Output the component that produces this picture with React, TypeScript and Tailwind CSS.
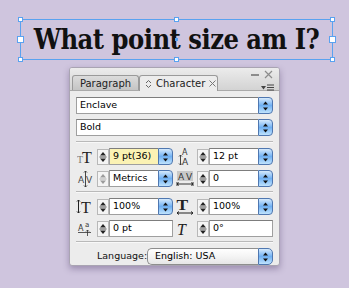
import type { ReactNode } from 'react';

const ui = { fontFamily: '"DejaVu Sans", "Liberation Sans", sans-serif' };
const serif = '"Liberation Serif", "DejaVu Serif", serif';

function Handle({ className, big }: { className: string; big?: boolean }) {
  return (
    <div
      className={`absolute bg-white border border-[#5aa2f0] ${big ? 'w-[7px] h-[7px]' : 'w-[5px] h-[5px]'} ${className}`}
    />
  );
}

function AquaArrows() {
  return (
    <svg width="7" height="10" viewBox="0 0 7 10">
      <path d="M3.5 0.5 L6 3.5 L1 3.5 Z" fill="#111" />
      <path d="M3.5 9.5 L6 6.5 L1 6.5 Z" fill="#111" />
    </svg>
  );
}

function AquaButton({ round }: { round?: boolean }) {
  return (
    <div
      className={`w-[15px] h-full flex items-center justify-center border border-[#4f77b0] bg-gradient-to-b from-[#d6eafc] via-[#6fb0f2] to-[#bfe3fd] ${
        round ? 'rounded-r-[5px]' : 'rounded-r-[4px]'
      }`}
    >
      <AquaArrows />
    </div>
  );
}

function Stepper({ disabled }: { disabled?: boolean }) {
  const c = disabled ? '#9c9c9c' : '#222';
  return (
    <div className="w-[12px] h-[16px] flex items-center justify-center border border-[#b8b8b8] bg-[#f4f4f4]">
      <svg width="8" height="12" viewBox="0 0 8 12">
        <path d="M4 1 L7 4.5 L1 4.5 Z" fill={c} />
        <rect x="0.5" y="5.6" width="7" height="0.8" fill={c} />
        <path d="M4 11 L7 7.5 L1 7.5 Z" fill={c} />
      </svg>
    </div>
  );
}

function Field({ value, yellow, w }: { value: string; yellow?: boolean; w: string }) {
  return (
    <div className={`flex h-[17px] ${w}`}>
      <div
        className={`flex-1 flex items-center pl-[3px] text-[9.5px] text-black border border-r-0 border-[#9f9f9f] border-t-[#7d7d7d] ${
          yellow ? 'bg-[#fbf2b4]' : 'bg-white'
        }`}
      >
        {value}
      </div>
      <AquaButton />
    </div>
  );
}

function Control({ icon, value, yellow, disabled }: { icon: ReactNode; value: string; yellow?: boolean; disabled?: boolean }) {
  return (
    <div className="flex items-center">
      <div className="w-[18px] h-[17px] flex items-center justify-center">{icon}</div>
      <div className="ml-[3px]">
        <Stepper disabled={disabled} />
      </div>
      <Field value={value} yellow={yellow} w="w-[64px]" />
    </div>
  );
}

function Plain({ icon, value }: { icon: ReactNode; value: string }) {
  return (
    <div className="flex items-center">
      <div className="w-[18px] h-[17px] flex items-center justify-center">{icon}</div>
      <div className="ml-[3px]">
        <Stepper />
      </div>
      <div className="w-[64px] h-[17px] flex items-center pl-[3px] text-[9.5px] bg-white border border-[#9f9f9f] border-t-[#7d7d7d]">
        {value}
      </div>
    </div>
  );
}

const SizeIcon = (
  <svg width="17" height="17" viewBox="0 0 17 17">
    <text x="0" y="15" fontFamily={serif} fontSize="10" fill="#777">T</text>
    <text x="5" y="15" fontFamily={serif} fontSize="16" fill="#222">T</text>
  </svg>
);

const LeadingIcon = (
  <svg width="16" height="18" viewBox="0 0 16 18">
    <text x="5" y="7" fontFamily={ui.fontFamily} fontSize="8" fill="#333">A</text>
    <text x="5" y="17" fontFamily={ui.fontFamily} fontSize="9" fill="#333">A</text>
    <path d="M3.5 7 V17 M2 8.5 L3.5 7 L5 8.5 M2 15.5 L3.5 17 L5 15.5" stroke="#333" strokeWidth="0.9" fill="none" />
  </svg>
);

const KernIcon = (
  <svg width="17" height="18" viewBox="0 0 17 18">
    <text x="1" y="13" fontFamily={ui.fontFamily} fontSize="9" fill="#444">A</text>
    <text x="9" y="13" fontFamily={ui.fontFamily} fontSize="9" fill="#444">V</text>
    <path d="M8.5 1 V17 M7 2.5 L8.5 1 L10 2.5 M7 15.5 L8.5 17 L10 15.5" stroke="#333" strokeWidth="0.9" fill="none" />
  </svg>
);

const TrackIcon = (
  <svg width="18" height="17" viewBox="0 0 18 17">
    <rect x="1" y="1" width="16" height="10" fill="#c8c8c8" />
    <text x="2" y="10" fontFamily={ui.fontFamily} fontSize="9" fill="#333">A</text>
    <text x="10" y="10" fontFamily={ui.fontFamily} fontSize="9" fill="#333">V</text>
    <path d="M1 14 H17 M3 12.5 L1 14 L3 15.5 M15 12.5 L17 14 L15 15.5 M1 12 V16 M17 12 V16" stroke="#222" strokeWidth="0.9" fill="none" />
  </svg>
);

const VScaleIcon = (
  <svg width="18" height="17" viewBox="0 0 18 17">
    <path d="M2.5 2 V15 M1 3.5 L2.5 2 L4 3.5 M1 13.5 L2.5 15 L4 13.5" stroke="#222" strokeWidth="1" fill="none" />
    <text x="5" y="14.5" fontFamily={serif} fontSize="16" fill="#222">T</text>
  </svg>
);

const HScaleIcon = (
  <svg width="18" height="17" viewBox="0 0 18 17">
    <text x="0.5" y="12" fontFamily={serif} fontSize="14" fontWeight="bold" fill="#222" transform="scale(1.25 1)">T</text>
    <path d="M1 15 H17 M3 13.5 L1 15 L3 16.5 M15 13.5 L17 15 L15 16.5" stroke="#222" strokeWidth="1" fill="none" />
  </svg>
);

const BaselineIcon = (
  <svg width="16" height="17" viewBox="0 0 16 17">
    <text x="1" y="11" fontFamily={ui.fontFamily} fontSize="8" fill="#333">A</text>
    <text x="8" y="7" fontFamily={ui.fontFamily} fontSize="7" fill="#333">a</text>
    <path d="M1 12.5 H14 M10.5 10 V16 M9 11.5 L10.5 10 L12 11.5" stroke="#333" strokeWidth="0.8" fill="none" />
  </svg>
);

const SkewIcon = (
  <svg width="18" height="17" viewBox="0 0 18 17">
    <text x="1" y="14.5" fontFamily={serif} fontSize="16" fontStyle="italic" fill="#222">T</text>
  </svg>
);

function Sep() {
  return <div className="h-[1px] bg-[#b9b9b9] border-b border-[#f8f8f8] box-content" />;
}

export default function App() {
  return (
    <div className="w-[349px] h-[288px] bg-[#cfc5de] overflow-hidden flex flex-col" style={ui}>
      {/* selected text frame */}
      <div className="relative ml-[20px] mt-[19px] w-[313px] h-[41px] border border-[#5aa2f0] flex items-center justify-center">
        <span
          className="text-[27px] font-bold text-[#111] leading-none tracking-[-0.5px]"
          style={{ fontFamily: '"DejaVu Serif Condensed", "DejaVu Serif", serif' }}
        >
          What point size am I?
        </span>
        <Handle className="-left-[3px] -top-[3px]" />
        <Handle className="left-[153px] -top-[3px]" />
        <Handle className="-right-[3px] -top-[3px]" />
        <Handle className="-left-[4px] top-[16px]" big />
        <Handle className="-right-[4px] top-[16px]" big />
        <Handle className="-left-[3px] -bottom-[3px]" />
        <Handle className="left-[153px] -bottom-[3px]" />
        <Handle className="-right-[3px] -bottom-[3px]" />
        <div className="absolute left-[154px] top-[18px] w-[3px] h-[3px] bg-[#5aa2f0]" />
      </div>

      {/* character panel */}
      <div className="ml-[69px] mt-[7px] w-[211px] h-[199px] bg-[#ececec] rounded-[3px] border border-[#a9a4b2] shadow-[0_3px_6px_rgba(60,40,90,0.35)] flex flex-col overflow-hidden">
        <div className="h-[23px] bg-gradient-to-b from-[#ececec] to-[#d3d3d3] border-b border-[#a9a9a9] flex items-end relative">
          <div className="ml-[2px] w-[67px] h-[15px] flex items-center justify-center text-[10px] text-[#222] bg-gradient-to-b from-[#dcdcdc] to-[#c4c4c4] border border-b-0 border-[#9a9a9a] rounded-t-[3px]">
            Paragraph
          </div>
          <div className="w-[79px] h-[16px] -mb-[1px] flex items-center gap-[4px] pl-[5px] text-[10px] text-[#222] bg-[#ececec] border border-b-0 border-[#9a9a9a] rounded-t-[3px]">
            <svg width="7" height="10" viewBox="0 0 7 10">
              <path d="M1 4 L3.5 1.5 L6 4 M1 6 L3.5 8.5 L6 6" stroke="#666" strokeWidth="1" fill="none" />
            </svg>
            <span>Character</span>
            <svg width="7" height="7" viewBox="0 0 7 7">
              <path d="M0.5 0.5 L6.5 6.5 M6.5 0.5 L0.5 6.5" stroke="#777" strokeWidth="1" />
            </svg>
          </div>
          <div className="absolute right-[6px] top-[2px] flex items-center gap-[5px]">
            <div className="w-[8px] h-[2px] bg-[#8c8c8c]" />
            <svg width="9" height="9" viewBox="0 0 9 9">
              <path d="M1 1 L8 8 M8 1 L1 8" stroke="#8c8c8c" strokeWidth="1.2" />
            </svg>
          </div>
          <div className="absolute right-[5px] bottom-[-1px] flex items-center gap-[1px]">
            <svg width="5" height="4" viewBox="0 0 5 4">
              <path d="M0 0 H5 L2.5 3.5 Z" fill="#444" />
            </svg>
            <svg width="7" height="7" viewBox="0 0 7 7">
              <path d="M0 1 H7 M0 3.5 H7 M0 6 H7" stroke="#444" strokeWidth="1" />
            </svg>
          </div>
        </div>

        <div className="px-[6px] pt-[6px] flex flex-col">
          <div className="flex h-[17px]">
            <div className="flex-1 flex items-center pl-[3px] text-[9.5px] bg-white border border-r-0 border-[#9f9f9f] border-t-[#7d7d7d]">
              Enclave
            </div>
            <AquaButton />
          </div>
          <div className="flex h-[17px] mt-[5px]">
            <div className="flex-1 flex items-center pl-[3px] text-[9.5px] bg-white border border-r-0 border-[#9f9f9f] border-t-[#7d7d7d]">
              Bold
            </div>
            <AquaButton />
          </div>
          <div className="mt-[5px]">
            <Sep />
          </div>

          <div className="mt-[5px] flex justify-between">
            <Control icon={SizeIcon} value="9 pt(36)" yellow />
            <Control icon={LeadingIcon} value="12 pt" />
          </div>
          <div className="mt-[5px] flex justify-between">
            <Control icon={KernIcon} value="Metrics" disabled />
            <Control icon={TrackIcon} value="0" />
          </div>
          <div className="mt-[4px]">
            <Sep />
          </div>

          <div className="mt-[5px] flex justify-between">
            <Control icon={VScaleIcon} value="100%" />
            <Control icon={HScaleIcon} value="100%" />
          </div>
          <div className="mt-[5px] flex justify-between">
            <Plain icon={BaselineIcon} value="0 pt" />
            <Plain icon={SkewIcon} value="0°" />
          </div>
          <div className="mt-[4px]">
            <Sep />
          </div>

          <div className="mt-[5px] flex items-center">
            <span className="ml-[21px] w-[49px] text-[9.5px] text-[#111]">Language:</span>
            <div className="ml-[1px] flex-1 flex h-[17px]">
              <div className="flex-1 flex items-center pl-[7px] text-[9.5px] rounded-l-[5px] bg-gradient-to-b from-white via-[#f4f4f4] to-[#e6e6e6] border border-r-0 border-[#8e8e8e]">
                English: USA
              </div>
              <AquaButton round />
            </div>
          </div>
        </div>
      </div>
    </div>
  );
}
